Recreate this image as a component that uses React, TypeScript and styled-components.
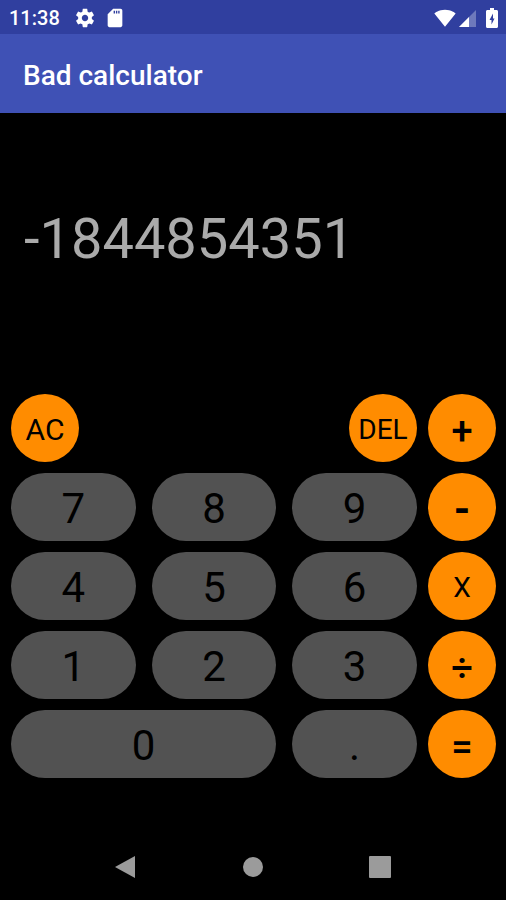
import React, { useState } from "react";
import styled, { createGlobalStyle } from "styled-components";

const GlobalStyle = createGlobalStyle`
  * { box-sizing: border-box; }
  body {
    margin: 0;
    background: #000;
    font-family: Roboto, "Liberation Sans", sans-serif;
  }
`;

const Screen = styled.div`
  min-height: 100vh;
  display: flex;
  flex-direction: column;
  background: #000;
`;

const StatusBar = styled.div`
  height: 34px;
  padding: 1px 8px 0 9px;
  display: flex;
  align-items: center;
  justify-content: space-between;
  background: #303f9f;
  color: #fff;
`;

const StatusGroup = styled.div<{ $gap: number }>`
  display: flex;
  align-items: center;
  gap: ${(p) => p.$gap}px;
`;

const Clock = styled.time`
  margin-right: 6px;
  font-size: 20px;
  line-height: 24px;
  font-weight: 500;
`;

const AppBar = styled.header`
  height: 79px;
  padding: 4px 23px 0;
  display: flex;
  align-items: center;
  background: #3f51b5;
`;

const Title = styled.h1`
  margin: 0;
  color: #fff;
  font-size: 28px;
  line-height: 32px;
  font-weight: 500;
`;

const Main = styled.main`
  flex: 1;
  display: flex;
  flex-direction: column;
`;

const Display = styled.output`
  flex: 1;
  display: flex;
  align-items: center;
  padding: 0 24px 30px;
  color: #aaa;
  font-size: 56px;
  line-height: 64px;
`;

const Keypad = styled.div`
  display: flex;
  gap: 11px;
  padding: 0 10px 55px 11px;
`;

const NumberPad = styled.div`
  flex: 1;
  display: grid;
  grid-template-columns: repeat(3, 1fr);
  grid-auto-rows: 68px;
  gap: 11px 16px;
`;

const OperatorPad = styled.div`
  display: grid;
  grid-auto-rows: 68px;
  gap: 11px;
`;

const Key = styled.button`
  height: 68px;
  padding: 2px 0 0;
  border: 0;
  border-radius: 34px;
  color: #000;
  font-family: inherit;
  font-weight: 400;
  cursor: pointer;
`;

const DigitKey = styled(Key)<{ $span?: number }>`
  grid-column: span ${(p) => p.$span ?? 1};
  background: #525252;
  font-size: 42px;
`;

const RoundKey = styled(Key)<{ $size: number; $column?: number; $end?: boolean }>`
  width: 68px;
  grid-column: ${(p) => p.$column ?? "auto"};
  justify-self: ${(p) => (p.$end ? "end" : "start")};
  background: #ff8c00;
  font-size: ${(p) => p.$size}px;
`;

const SymbolKey = styled(RoundKey)<{ $weight: number }>`
  padding-top: 5px;
  font-weight: ${(p) => p.$weight};
`;

const NavBar = styled.nav`
  height: 67px;
  display: flex;
  align-items: center;
  justify-content: center;
  gap: 79px;
`;

const NavButton = styled.button`
  width: 48px;
  height: 48px;
  padding: 0;
  border: 0;
  display: grid;
  place-items: center;
  background: transparent;
  color: #9b9b9b;
`;

const symbols = [
  { label: "÷", name: "Divide" },
  { label: "=", name: "Equals" },
];

export default function App() {
  const [value, setValue] = useState("-1844854351");
  const press = (k: string) => setValue((v) => v + k);

  return (
    <Screen>
      <GlobalStyle />
      <StatusBar>
        <StatusGroup $gap={8}>
          <Clock>11:38</Clock>
          <svg width="22" height="22" viewBox="0 0 24 24" fill="currentColor" aria-hidden="true">
            <path d="M19.43 12.98c.04-.32.07-.64.07-.98s-.03-.66-.07-.98l2.11-1.65c.19-.15.24-.42.12-.64l-2-3.46c-.12-.22-.39-.3-.61-.22l-2.49 1c-.52-.4-1.080-.73-1.690-.98l-.38-2.650C14.460 2.180 14.250 2 14 2h-4c-.25 0-.46.18-.49.42l-.38 2.650c-.61.25-1.170.59-1.690.98l-2.490-1c-.23-.09-.49 0-.61.22l-2 3.460c-.13.22-.07.49.12.64l2.110 1.650c-.04.32-.07.65-.07.98s.03.66.07.98l-2.110 1.650c-.19.15-.24.42-.12.64l2 3.460c.12.22.39.3.61.22l2.490-1c.52.4 1.080.73 1.690.98l.38 2.650c.03.24.24.42.49.42h4c.25 0 .46-.18.49-.42l.38-2.650c.61-.25 1.170-.59 1.690-.98l2.490 1c.23.09.49 0 .61-.22l2-3.460c.12-.22.07-.49-.12-.64l-2.110-1.650zM12 15.500c-1.930 0-3.500-1.570-3.500-3.500s1.570-3.500 3.500-3.500 3.500 1.570 3.500 3.500-1.570 3.500-3.500 3.500z" />
          </svg>
          <svg width="22" height="22" viewBox="0 0 24 24" fill="currentColor" aria-hidden="true">
            <path d="M18 2h-8L4 8v12c0 1.100.9 2 2 2h12c1.100 0 2-.9 2-2V4c0-1.100-.9-2-2-2zm-6 5h-1.500V4H12zm2.500 0H13V4h1.500zm2.500 0h-1.500V4H17z" />
          </svg>
        </StatusGroup>
        <StatusGroup $gap={2}>
          <svg width="22" height="22" viewBox="0 0 24 24" fill="currentColor" aria-label="Wi-Fi">
            <path d="M12.010 21.490L23.640 7c-.45-.34-4.930-4-11.640-4C5.280 3 .81 6.660.36 7l11.630 14.490.010.010.010-.010z" />
          </svg>
          <svg width="18" height="18" viewBox="0 0 18 18" fill="currentColor" aria-label="Signal">
            <path d="M1 18H18V1z" opacity=".3" />
            <path d="M1 18H11V8z" />
          </svg>
          <svg width="20" height="20" viewBox="0 0 20 20" fill="currentColor" aria-label="Battery charging">
            <path
              fillRule="evenodd"
              d="M12 0h4v2h2.500c.9 0 1.500.6 1.500 1.500v15c0 .9-.6 1.500-1.500 1.500h-9c-.9 0-1.500-.6-1.500-1.500v-15C8 2.600 8.600 2 9.500 2H12zM15 5.500L11.500 12h2v4.500L16.500 10.500h-1.500z"
            />
          </svg>
        </StatusGroup>
      </StatusBar>
      <AppBar>
        <Title>Bad calculator</Title>
      </AppBar>
      <Main>
        <Display>{value}</Display>
        <Keypad>
          <NumberPad>
            <RoundKey $size={30} $column={1} onClick={() => setValue("")}>AC</RoundKey>
            <RoundKey $size={28} $column={3} $end onClick={() => setValue((v) => v.slice(0, -1))}>DEL</RoundKey>
            {["7", "8", "9", "4", "5", "6", "1", "2", "3"].map((d) => (
              <DigitKey key={d} onClick={() => press(d)}>{d}</DigitKey>
            ))}
            <DigitKey $span={2} onClick={() => press("0")}>0</DigitKey>
            <DigitKey onClick={() => press(".")}>.</DigitKey>
          </NumberPad>
          <OperatorPad>
            <SymbolKey $size={38} $weight={500} aria-label="Add">+</SymbolKey>
            <SymbolKey $size={42} $weight={700} aria-label="Subtract">-</SymbolKey>
            <RoundKey $size={28} aria-label="Multiply">X</RoundKey>
            {symbols.map((o) => (
              <SymbolKey key={o.name} $size={38} $weight={500} aria-label={o.name}>{o.label}</SymbolKey>
            ))}
          </OperatorPad>
        </Keypad>
      </Main>
      <NavBar>
        <NavButton aria-label="Back">
          <svg width="24" height="24" viewBox="0 0 24 24" fill="currentColor">
            <path d="M1 12L21 1v22z" />
          </svg>
        </NavButton>
        <NavButton aria-label="Home">
          <svg width="24" height="24" viewBox="0 0 24 24" fill="currentColor">
            <circle cx="12" cy="12" r="10" />
          </svg>
        </NavButton>
        <NavButton aria-label="Recent apps">
          <svg width="24" height="24" viewBox="0 0 24 24" fill="currentColor">
            <rect x="1" y="1" width="22" height="22" rx="1" />
          </svg>
        </NavButton>
      </NavBar>
    </Screen>
  );
}
